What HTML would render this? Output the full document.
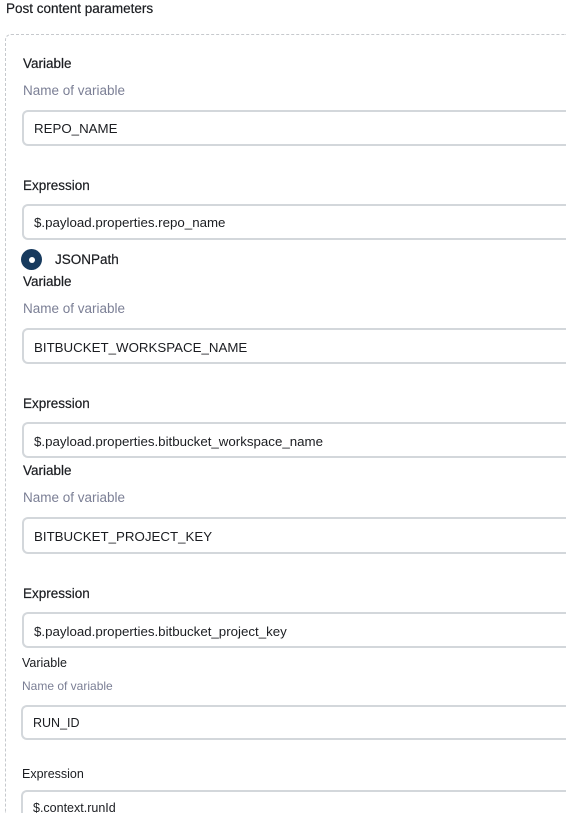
<!DOCTYPE html>
<html style="overflow:hidden;height:813px"><head><style>
body{margin:0;width:566px;height:813px;overflow:hidden;background:#fff;font-family:"Liberation Sans",sans-serif;color:#1b1d21;position:relative}
.t{position:absolute;white-space:nowrap;line-height:1;margin-top:1px}
.l{font-size:13.5px;font-weight:500;-webkit-text-stroke:0.2px #1b1d21}
.g{font-size:13.5px;color:#7b7f95}
.in{position:absolute;left:22px;width:544px;border:2px solid #d3d7db;border-right:none;border-radius:6px 0 0 6px;box-sizing:border-box;background:#fff}
.in span{position:absolute;left:10px;font-size:13.3px;line-height:1}
</style></head><body>
<div class="t" style="left:6px;top:1px;font-size:13.5px;-webkit-text-stroke:0.2px #1b1d21">Post content parameters</div>
<div style="position:absolute;left:5px;top:34px;width:561px;height:779px;box-sizing:border-box;border:1.5px dashed #c6c9cd;border-right:none;border-bottom:none;border-radius:6px 0 0 0"></div>

<div class="t l" style="left:23px;top:56px">Variable</div>
<div class="t g" style="left:23px;top:83px">Name of variable</div>
<div class="in" style="top:110px;height:36px"><span style="top:10px">REPO_NAME</span></div>

<div class="t l" style="left:23px;top:178px">Expression</div>
<div class="in" style="top:204px;height:36px"><span style="top:10px">$.payload.properties.repo_name</span></div>

<div style="position:absolute;left:21px;top:249px;width:21px;height:21px;border-radius:50%;background:#173a5e"></div>
<div style="position:absolute;left:28.5px;top:256.5px;width:6px;height:6px;border-radius:50%;background:#fff"></div>
<div class="t l" style="left:55px;top:252px">JSONPath</div>

<div class="t l" style="left:23px;top:274px">Variable</div>
<div class="t g" style="left:23px;top:301px">Name of variable</div>
<div class="in" style="top:328px;height:36px"><span style="top:11px">BITBUCKET_WORKSPACE_NAME</span></div>

<div class="t l" style="left:23px;top:396px">Expression</div>
<div class="in" style="top:422px;height:36px"><span style="top:11px">$.payload.properties.bitbucket_workspace_name</span></div>

<div class="t l" style="left:23px;top:463px">Variable</div>
<div class="t g" style="left:23px;top:490px">Name of variable</div>
<div class="in" style="top:517px;height:37px"><span style="top:11px">BITBUCKET_PROJECT_KEY</span></div>

<div class="t l" style="left:23px;top:586px">Expression</div>
<div class="in" style="top:612px;height:36px"><span style="top:11px">$.payload.properties.bitbucket_project_key</span></div>

<div class="t" style="left:22px;top:656px;font-size:12.5px;font-weight:500">Variable</div>
<div class="t" style="left:22px;top:679px;font-size:12px;color:#7b7f95">Name of variable</div>
<div class="in" style="left:21px;width:545px;top:705px;height:35px"><span style="top:10px;font-size:12.5px">RUN_ID</span></div>

<div class="t" style="left:22px;top:767px;font-size:12.5px;font-weight:500">Expression</div>
<div class="in" style="left:21px;width:545px;top:790px;height:23px;border-bottom:none;border-radius:6px 0 0 0"><span style="top:10px;font-size:12.5px">$.context.runId</span></div>
</body></html>
